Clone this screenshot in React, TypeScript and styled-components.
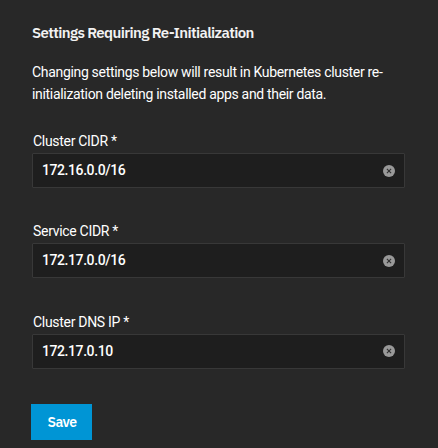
import React, { useState } from "react";
import styled, { createGlobalStyle } from "styled-components";

const GlobalStyle = createGlobalStyle`
  * { box-sizing: border-box; }
  html, body {
    margin: 0;
    background: #282828;
  }
`;

const Panel = styled.section`
  height: 448px;
  overflow: hidden;
  padding: 23px 33px 0 32px;
  background: #282828;
  color: #fff;
  font-family: Roboto, "Liberation Sans", sans-serif;
  font-size: 14px;
`;

const Title = styled.h3`
  margin: 0;
  font-family: "IBM Plex Sans", Roboto, sans-serif;
  font-size: 15px;
  font-weight: 600;
  line-height: 20px;
  letter-spacing: -0.62px;
  white-space: nowrap;
  color: #f2f2f2;
`;

const Description = styled.p`
  margin: 18px 0 0;
  width: 360px;
  font-size: 14px;
  line-height: 22px;
  letter-spacing: -0.32px;
`;

const Fields = styled.div`
  display: flex;
  flex-direction: column;
  gap: 34.4px;
  margin-top: 27px;
`;

const Field = styled.div`
  display: flex;
  flex-direction: column;
`;

const Label = styled.label`
  height: 21px;
  padding-left: 1px;
  font-size: 14px;
  line-height: 18px;
  letter-spacing: -0.3px;
`;

const InputBox = styled.div`
  display: flex;
  align-items: center;
  height: 35px;
  padding: 0 9px;
  background: #1e1e1e;
  border: 1px solid #383838;
  border-radius: 1px;
`;

const Input = styled.input`
  flex: 1;
  min-width: 0;
  height: 100%;
  padding: 0 0 1px;
  border: 0;
  outline: 0;
  background: transparent;
  color: #fff;
  font: 500 14px Roboto, "Liberation Sans", sans-serif;
  letter-spacing: -0.42px;
`;

const ClearButton = styled.button`
  display: flex;
  padding: 0;
  border: 0;
  background: transparent;
  cursor: pointer;
`;

const SaveButton = styled.button`
  display: block;
  width: 61px;
  height: 36px;
  margin: 35px 0 0 -1px;
  padding: 0 0 0 1px;
  border: 0;
  background: #0095d5;
  color: #fff;
  font-family: "IBM Plex Sans", Roboto, sans-serif;
  font-size: 14px;
  font-weight: 600;
  letter-spacing: -0.6px;
  cursor: pointer;
`;

const ClearIcon = () => (
  <svg width="12" height="12" viewBox="0 0 12 12" aria-hidden="true">
    <circle cx="6" cy="6" r="6" fill="#999" />
    <path d="M3.9 3.9 8.1 8.1M8.1 3.9 3.9 8.1" stroke="#303030" strokeWidth="1.1" />
  </svg>
);

const initialFields = [
  { id: "cluster-cidr", label: "Cluster CIDR *", value: "172.16.0.0/16" },
  { id: "service-cidr", label: "Service CIDR *", value: "172.17.0.0/16" },
  { id: "cluster-dns", label: "Cluster DNS IP *", value: "172.17.0.10" },
];

export default function App() {
  const [fields, setFields] = useState(initialFields);
  const update = (id: string, value: string) =>
    setFields((all) => all.map((f) => (f.id === id ? { ...f, value } : f)));

  return (
    <Panel>
      <GlobalStyle />
      <Title>Settings Requiring Re-Initialization</Title>
      <Description>
        Changing settings below will result in Kubernetes cluster re-
        <wbr />
        initialization deleting installed apps and their data.
      </Description>
      <Fields>
        {fields.map((f) => (
          <Field key={f.id}>
            <Label htmlFor={f.id}>{f.label}</Label>
            <InputBox>
              <Input id={f.id} value={f.value} onChange={(e) => update(f.id, e.target.value)} />
              <ClearButton type="button" aria-label="Clear" onClick={() => update(f.id, "")}>
                <ClearIcon />
              </ClearButton>
            </InputBox>
          </Field>
        ))}
      </Fields>
      <SaveButton type="button">Save</SaveButton>
    </Panel>
  );
}
